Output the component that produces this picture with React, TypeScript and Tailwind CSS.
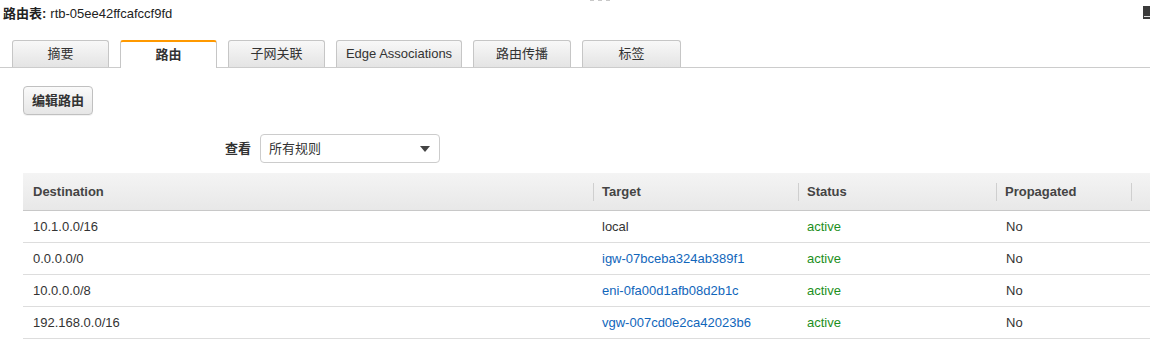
const tabs = [
  { label: "摘要", w: "w-[97px]" },
  { label: "路由", w: "w-[97px]", active: true },
  { label: "子网关联", w: "w-[97px]" },
  { label: "Edge Associations", w: "w-[126px]" },
  { label: "路由传播", w: "w-[98px]" },
  { label: "标签", w: "w-[99px]" },
]

const routes = [
  { dest: "10.1.0.0/16", target: "local", link: false },
  { dest: "0.0.0.0/0", target: "igw-07bceba324ab389f1", link: true },
  { dest: "10.0.0.0/8", target: "eni-0fa00d1afb08d2b1c", link: true },
  { dest: "192.168.0.0/16", target: "vgw-007cd0e2ca42023b6", link: true },
]

const font = "font-['Liberation_Sans','Noto_Sans_CJK_SC',sans-serif]"

function HeaderCell({ label, w, sep }: { label?: string; w: string; sep?: boolean }) {
  return (
    <div className={`${w} h-full flex items-center relative ${sep ? "pl-[9px]" : "pl-[10px]"}`}>
      {sep && <div className="absolute left-0 top-[10px] h-[18px] w-px bg-[#cfcfcf]" />}
      {label && <span className="text-[13px] font-bold text-[#444]">{label}</span>}
    </div>
  )
}

export default function App() {
  return (
    <div className={`w-[1150px] h-[358px] bg-white overflow-hidden relative ${font} text-[#333]`}>
      {/* faint dots at top */}
      <div className="absolute left-[590px] top-0 flex gap-[4px]">
        <div className="w-[4px] h-[1px] bg-[#c8c8c8]" />
        <div className="w-[4px] h-[1px] bg-[#c8c8c8]" />
        <div className="w-[4px] h-[1px] bg-[#c8c8c8]" />
      </div>
      {/* corner widget */}
      <div className="absolute left-[1143px] top-[6px] w-[8px] h-[13px] bg-[#3a3a3a] flex items-end pb-[2px]">
        <div className="w-full h-[1px] bg-[#ddd] ml-[1px]" />
      </div>

      <div className="h-[27px] flex items-center pl-[3px] text-[13px]">
        <span className="font-bold text-[#222]">路由表:</span>
        <span className="ml-[4px] text-[#222]">rtb-05ee42ffcafccf9fd</span>
      </div>

      {/* Tabs */}
      <div className="mt-[13px] flex items-end gap-[11px] pl-[12px] border-b border-[#cccccc] h-[28px]">
        {tabs.map((t) =>
          t.active ? (
            <div
              key={t.label}
              className={`${t.w} h-[28px] -mb-px bg-white border-x border-[#c6c6c6] border-t-2 border-t-[#f90] rounded-t-[3px] flex items-center justify-center text-[13px] font-bold text-[#333]`}
            >
              {t.label}
            </div>
          ) : (
            <div
              key={t.label}
              className={`${t.w} h-[27px] bg-gradient-to-b from-[#f8f8f8] to-[#e4e4e4] border-x border-t border-[#c6c6c6] rounded-t-[3px] flex items-center justify-center text-[13px] text-[#333]`}
            >
              {t.label}
            </div>
          )
        )}
      </div>

      <div className="pl-[23px]">
        <button className="mt-[18px] w-[70px] h-[29px] rounded-[4px] border border-[#c0c0c0] bg-gradient-to-b from-[#fafafa] to-[#e6e6e6] text-[13px] font-bold text-[#333] shadow-[0_1px_0_rgba(0,0,0,0.05)]">
          编辑路由
        </button>

        <div className="mt-[19px] flex items-center">
          <div className="w-[228px] text-right text-[13px] font-bold text-[#333]">查看</div>
          <div className="ml-[9px] w-[180px] h-[29px] rounded-[4px] border border-[#cccccc] bg-white flex items-center justify-between pl-[8px] pr-[9px] text-[13px] text-[#333]">
            <span>所有规则</span>
            <svg width="10" height="6" viewBox="0 0 10 6">
              <path d="M0 0 L10 0 L5 6 Z" fill="#444" />
            </svg>
          </div>
        </div>

        {/* Table */}
        <div className="mt-[10px] w-[1127px]">
          <div className="flex h-[38px] bg-gradient-to-b from-[#f4f4f4] to-[#e8e8e8] border-b border-[#c8c8c8]">
            <HeaderCell label="Destination" w="w-[570px]" />
            <HeaderCell label="Target" w="w-[205px]" sep />
            <HeaderCell label="Status" w="w-[198px]" sep />
            <HeaderCell label="Propagated" w="w-[135px]" sep />
            <HeaderCell w="flex-1" sep />
          </div>
          {routes.map((r) => (
            <div key={r.dest} className="flex h-[32px] items-center border-b border-[#dddddd] text-[13px]">
              <div className="w-[570px] pl-[10px] text-[#333]">{r.dest}</div>
              <div className={`w-[205px] pl-[9px] ${r.link ? "text-[#1166bb]" : "text-[#333]"}`}>{r.target}</div>
              <div className="w-[198px] pl-[9px] text-[#1d8f1d]">active</div>
              <div className="w-[135px] pl-[10px] text-[#333]">No</div>
            </div>
          ))}
        </div>
      </div>
    </div>
  )
}
